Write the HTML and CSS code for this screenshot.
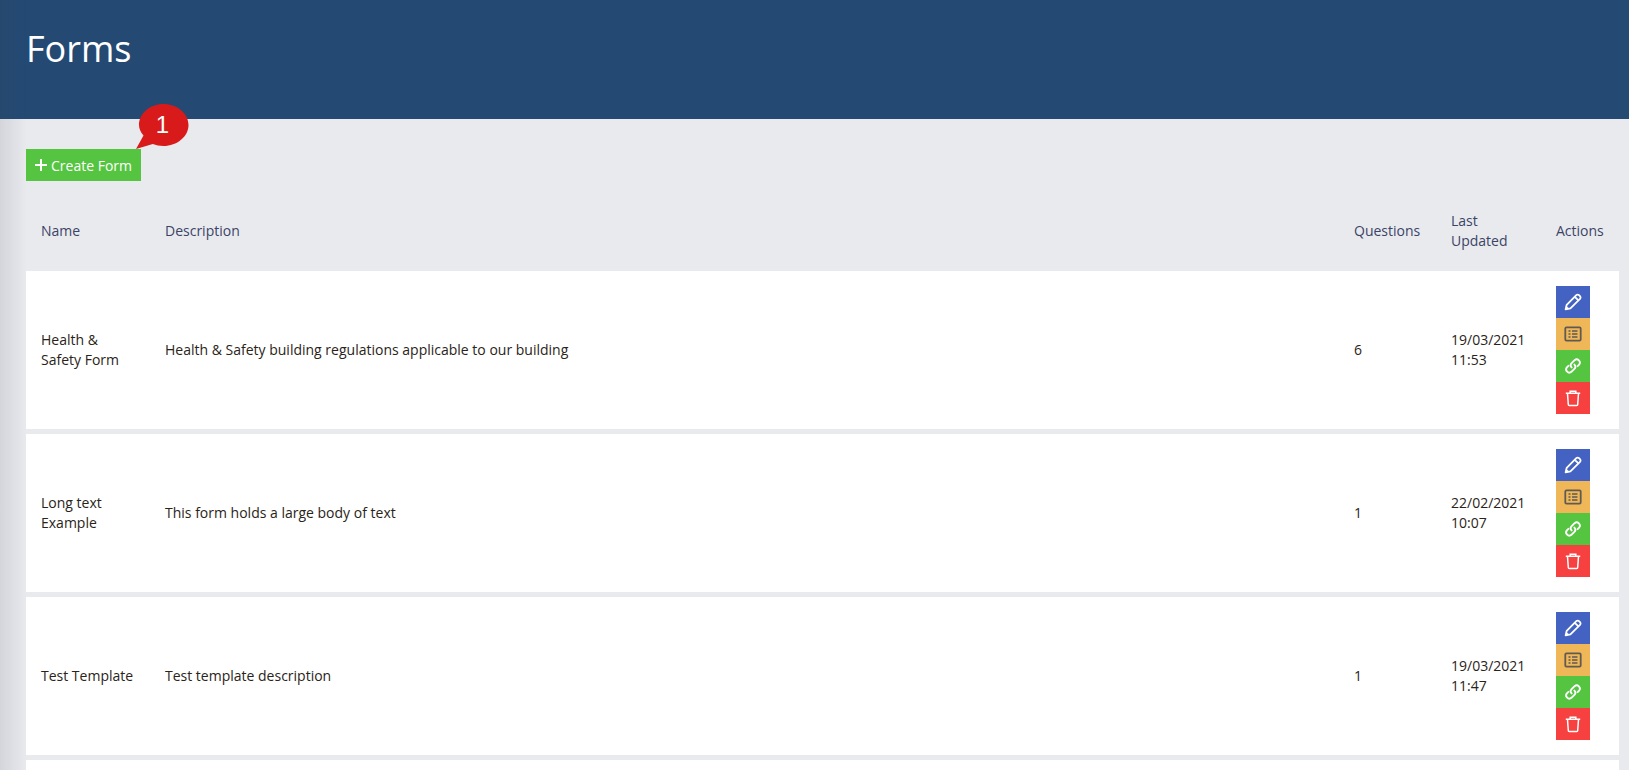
FILE: index.html
```html
<!DOCTYPE html>
<html lang="en">
<head>
    <meta charset="UTF-8">
    <title>Forms</title>
    <link rel="stylesheet" href="styles.css">
</head>
<body>
    <svg width="0" height="0" class="defs">
        <symbol id="i-edit" viewBox="0 0 18 18">
            <path d="M1.600 16.400l1.100-4.600L12.300 2.200a1.900 1.900 0 0 1 2.700 0l1 1a1.900 1.900 0 0 1 0 2.700l-9.600 9.400z" fill="none" stroke="currentColor" stroke-width="1.800" stroke-linejoin="round"/>
            <path d="M10.800 3.800l3.600 3.600" fill="none" stroke="currentColor" stroke-width="1.800"/>
            <path d="M1.600 16.400l.8-3.400 2.700 2.600z" fill="currentColor"/>
        </symbol>
        <symbol id="i-list" viewBox="0 0 18 18">
            <rect x="1.300" y="2.300" width="15.400" height="13.400" rx="1.200" fill="none" stroke="currentColor" stroke-width="1.800"/>
            <path d="M4.500 6h2M4.500 9h2M4.500 12h2M8 6h5.500M8 9h5.500M8 12h5.500" fill="none" stroke="currentColor" stroke-width="1.500"/>
        </symbol>
        <symbol id="i-link" viewBox="0 0 18 18">
            <path d="M7.600 10.400a3 3 0 0 1 0-4.200l3-3a3.200 3.200 0 0 1 4.500 4.500l-1.500 1.500" fill="none" stroke="currentColor" stroke-width="1.900" stroke-linecap="round"/>
            <path d="M10.400 7.600a3 3 0 0 1 0 4.200l-3 3a3.200 3.200 0 0 1-4.500-4.500l1.500-1.500" fill="none" stroke="currentColor" stroke-width="1.900" stroke-linecap="round"/>
        </symbol>
        <symbol id="i-trash" viewBox="0 0 18 18">
            <path d="M1.800 4.200h14.400M6.200 4V2.200h5.600V4" fill="none" stroke="currentColor" stroke-width="1.500"/>
            <path d="M3.500 4.500l.8 11a1 1 0 0 0 1 1h7.400a1 1 0 0 0 1-1l.8-11" fill="none" stroke="currentColor" stroke-width="1.500"/>
        </symbol>
    </svg>

    <header class="page-header">
        <h1>Forms</h1>
    </header>

    <main class="content">
        <div class="toolbar">
            <button class="btn-create">
                <svg class="plus" width="12" height="12" viewBox="0 0 12 12"><path d="M6 0v12M0 6h12" stroke="#fff" stroke-width="2"/></svg>
                Create Form
            </button>
            <svg class="callout" width="56" height="48" viewBox="0 0 56 48">
                <path d="M29.500 0C43 0 54.500 9.400 54.500 21S43 42 29.500 42c-4 0-7.500-.7-10.700-2L2 45 9.500 31.500C6.500 28 5 24.800 5 21 5 9.400 16 0 29.500 0z" fill="#d91a1a"/>
                <text x="28.500" y="29">1</text>
            </svg>
        </div>

        <table class="forms-table">
            <colgroup>
                <col class="col-name">
                <col>
                <col class="col-questions">
                <col class="col-updated">
                <col class="col-actions">
            </colgroup>
            <thead>
                <tr>
                    <th>Name</th>
                    <th>Description</th>
                    <th>Questions</th>
                    <th>Last Updated</th>
                    <th>Actions</th>
                </tr>
            </thead>
            <tbody>
                <tr>
                    <td>Health &amp; Safety Form</td>
                    <td>Health &amp; Safety building regulations applicable to our building</td>
                    <td>6</td>
                    <td>19/03/2021 11:53</td>
                    <td>
                        <div class="actions">
                            <a class="act act-edit"><svg><use href="#i-edit"/></svg></a>
                            <a class="act act-list"><svg><use href="#i-list"/></svg></a>
                            <a class="act act-link"><svg><use href="#i-link"/></svg></a>
                            <a class="act act-delete"><svg><use href="#i-trash"/></svg></a>
                        </div>
                    </td>
                </tr>
                <tr>
                    <td>Long text Example</td>
                    <td>This form holds a large body of text</td>
                    <td>1</td>
                    <td>22/02/2021 10:07</td>
                    <td>
                        <div class="actions">
                            <a class="act act-edit"><svg><use href="#i-edit"/></svg></a>
                            <a class="act act-list"><svg><use href="#i-list"/></svg></a>
                            <a class="act act-link"><svg><use href="#i-link"/></svg></a>
                            <a class="act act-delete"><svg><use href="#i-trash"/></svg></a>
                        </div>
                    </td>
                </tr>
                <tr>
                    <td>Test Template</td>
                    <td>Test template description</td>
                    <td>1</td>
                    <td>19/03/2021 11:47</td>
                    <td>
                        <div class="actions">
                            <a class="act act-edit"><svg><use href="#i-edit"/></svg></a>
                            <a class="act act-list"><svg><use href="#i-list"/></svg></a>
                            <a class="act act-link"><svg><use href="#i-link"/></svg></a>
                            <a class="act act-delete"><svg><use href="#i-trash"/></svg></a>
                        </div>
                    </td>
                </tr>
                <tr class="row-next">
                    <td colspan="5"></td>
                </tr>
            </tbody>
        </table>
    </main>
</body>
</html>
```

FILE: styles.css
```css
html, body {
    height: 100%;
    overflow: hidden;
}
body {
    margin: 0;
    font-family: "Open Sans", sans-serif;
    font-size: 14px;
    line-height: 20px;
    color: #2a2418;
    background: #e9eaee;
}
/* sombra del menu lateral */
body::before {
    content: "";
    position: fixed;
    top: 0;
    bottom: 0;
    left: 0;
    width: 26px;
    background: linear-gradient(to right, rgba(60,65,80,0.12), rgba(60,65,80,0));
}
.defs {
    position: absolute;
}
.page-header {
    height: 119px;
    box-sizing: border-box;
    padding: 24px 26px 0;
    background: #244a74;
}
.page-header h1 {
    margin: 0;
    font-size: 36px;
    line-height: 50px;
    font-weight: 400;
    color: #fff;
}
.content {
    padding: 30px 10px 0 26px;
}
.toolbar {
    position: relative;
    height: 32px;
    margin-bottom: 10px;
}
.btn-create {
    display: flex;
    align-items: center;
    gap: 4px;
    height: 32px;
    width: 115px;
    padding: 0 0 0 9px;
    border: none;
    background: #55c441;
    color: #fff;
    font-family: inherit;
    font-size: 14px;
    white-space: nowrap;
}
.callout {
    position: absolute;
    left: 108px;
    top: -45px;
}
.callout text {
    font-family: "Liberation Sans", sans-serif;
    font-size: 24px;
    text-anchor: middle;
    fill: #fff;
}
.forms-table {
    width: 100%;
    table-layout: fixed;
    border-collapse: separate;
    border-spacing: 0 5px;
}
.col-name { width: 124px; }
.col-questions { width: 97px; }
.col-updated { width: 105px; }
.col-actions { width: 78px; }
.forms-table th {
    padding: 15px;
    text-align: left;
    font-weight: 400;
    color: #3b4466;
}
.forms-table td {
    padding: 15px;
    background: #fff;
}
.row-next td {
    height: 128px;
}
.actions {
    display: flex;
    flex-direction: column;
    width: 34px;
}
.act {
    display: flex;
    align-items: center;
    justify-content: center;
    height: 32px;
    color: #fff;
}
.act svg {
    width: 18px;
    height: 18px;
}
.act-edit { background: #4362c2; }
.act-list { background: #f0b758; color: #5f5a52; }
.act-link { background: #55c441; }
.act-delete { background: #f74040; }
```
